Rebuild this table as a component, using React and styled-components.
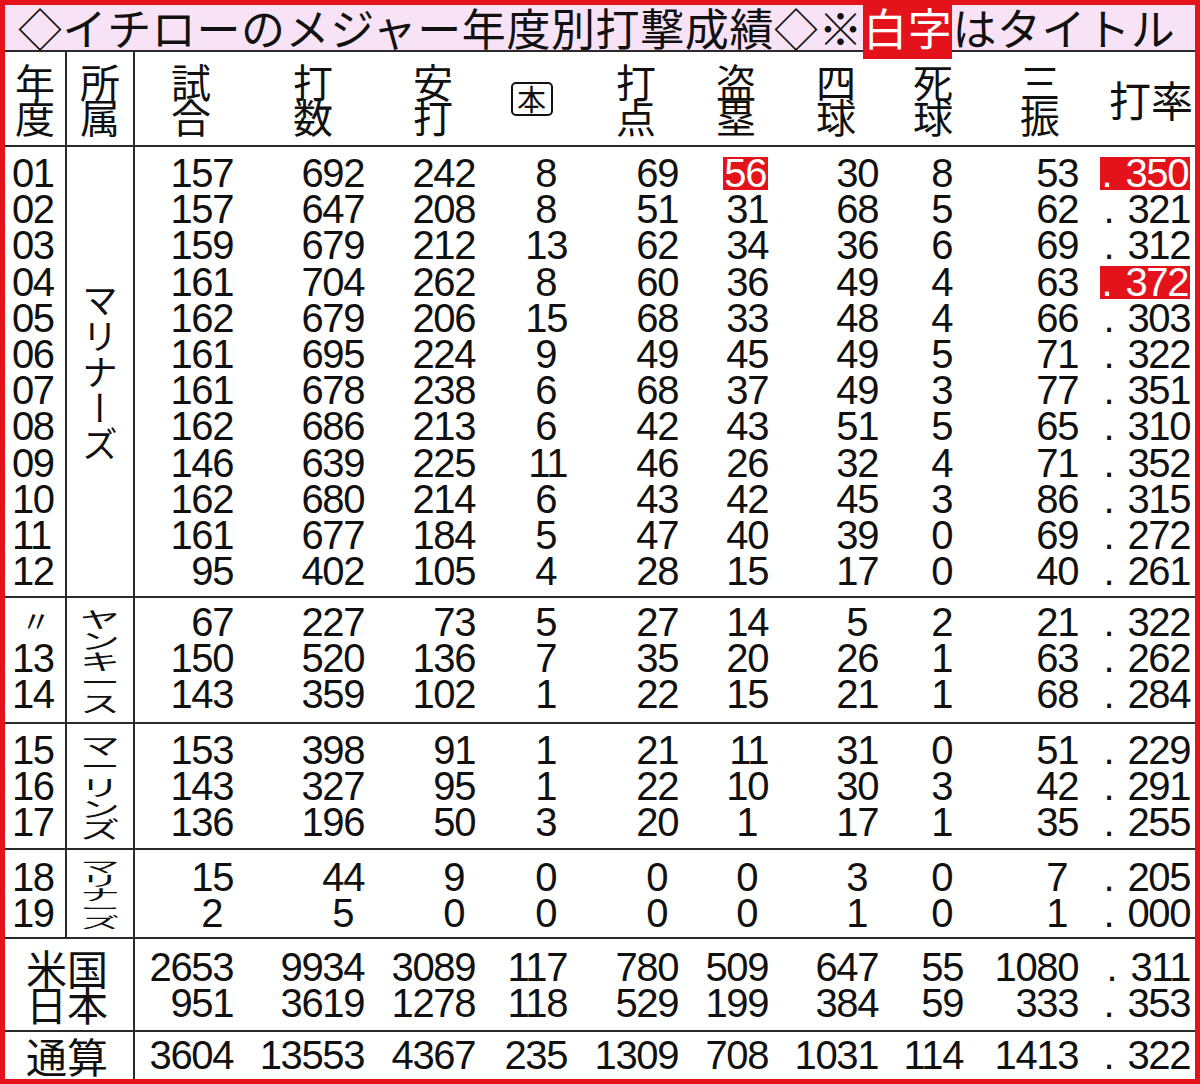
import React from "react";
import styled, { createGlobalStyle } from "styled-components";

const RED = "#e3121b";
const LINE = "#2a2a2a";
const NUM_FONT = `"Liberation Sans", Arial, sans-serif`;
const JP_FONT = `"Noto Sans CJK JP", "Noto Sans", sans-serif`;

// numeric columns: 試合 打数 安打 本 打点 盗塁 四球 死球 三振 打率
const BODY_COLS = "98px 131px 111px 92px 111px 90px 110px 85px 115px 112px";
const HEAD_COLS = "112px 132px 108px 90px 118px 82px 118px 76px 138px 1fr";
const ROW_H = 36.2;

const GlobalStyle = createGlobalStyle`
  html, body {
    margin: 0;
    padding: 0;
    background: #fff;
  }
  body {
    font-family: ${JP_FONT};
    color: #111;
  }
`;

const Frame = styled.div`
  width: 1200px;
  height: 1084px;
  box-sizing: border-box;
  border: 5px solid ${RED};
  background: #fff;
  display: flex;
  flex-direction: column;
  overflow: hidden;
`;

const Title = styled.div`
  height: 47px;
  box-sizing: border-box;
  background: #f8e2f5;
  border-bottom: 2px solid ${LINE};
  padding-left: 13px;
  font: 400 44px/45px ${JP_FONT};
  letter-spacing: 0.6px;
  white-space: nowrap;
`;

const TitleMark = styled.span`
  background: ${RED};
  color: #fff;
`;

const HeadRow = styled.div`
  display: grid;
  grid-template-columns: 62px 68px ${HEAD_COLS};
  height: 95px;
  box-sizing: border-box;
  border-bottom: 2px solid ${LINE};
`;

const HeadCell = styled.div`
  display: flex;
  align-items: center;
  justify-content: ${(p) => (p.$end ? "flex-end" : "center")};
  padding-right: ${(p) => (p.$end ? "12px" : "0")};
  border-right: ${(p) => (p.$divider ? `2px solid ${LINE}` : "none")};
  font: 400 ${(p) => (p.$end ? "42px" : "40px")} / 35px ${JP_FONT};
  text-align: center;
  white-space: nowrap;
`;

const HomerBox = styled.span`
  display: inline-flex;
  align-items: center;
  justify-content: center;
  width: 38px;
  height: 30px;
  margin-right: 1px;
  border: 2px solid #111;
  border-radius: 5px;
  font: 400 29px/1 ${JP_FONT};
`;

const Section = styled.div`
  display: grid;
  grid-template-columns: 62px 68px 1fr;
  grid-template-rows: minmax(0, 1fr);
  height: ${(p) => p.$h}px;
  box-sizing: border-box;
  border-bottom: ${(p) => (p.$last ? "none" : `2px solid ${LINE}`)};
`;

const YearCol = styled.div`
  padding: ${(p) => p.$pt}px 0 0 7px;
  border-right: 2px solid ${LINE};
  font: 400 40px/${ROW_H}px ${NUM_FONT};
  letter-spacing: -1.4px;
`;

const YearLabel = styled.div`
  height: ${ROW_H}px;
`;

const Ditto = styled.span`
  display: inline-block;
  padding-left: 9px;
  font: 400 30px/${ROW_H}px ${JP_FONT};
  transform: translateY(-4px);
`;

const TeamCell = styled.div`
  display: flex;
  align-items: center;
  justify-content: center;
  min-height: 0;
  border-right: 2px solid ${LINE};
`;

const VerticalName = styled.div`
  writing-mode: vertical-rl;
  font: 400 36px/1 ${JP_FONT};
`;

const StackedName = styled.div`
  display: flex;
  flex-direction: column;
  align-items: center;
`;

const StackChar = styled.span`
  display: block;
  height: ${(p) => p.$pitch}px;
  font: 400 40px/${(p) => p.$pitch}px ${JP_FONT};
  transform: scaleY(${(p) => p.$scale});
`;

const MergedLabel = styled.div`
  grid-column: 1 / 3;
  padding: ${(p) => p.$pt}px 4px 0 0;
  border-right: 2px solid ${LINE};
  font: 400 41px/${ROW_H}px ${JP_FONT};
  text-align: center;
`;

const RowsCol = styled.div`
  padding-top: ${(p) => p.$pt}px;
`;

const Row = styled.div`
  display: grid;
  grid-template-columns: ${BODY_COLS};
  height: ${ROW_H}px;
  font: 400 40px/${ROW_H}px ${NUM_FONT};
  letter-spacing: -1.4px;
`;

const Cell = styled.div`
  text-align: right;
  white-space: nowrap;
  padding-right: ${(p) => (p.$single ? "11px" : "0")};
`;

const Highlight = styled.span`
  display: inline-block;
  background: ${RED};
  color: #fff;
  line-height: 33px;
  padding: 0 2px 0 1px;
`;

const Dot = styled.span`
  display: inline-block;
  width: 24px;
  text-align: left;
`;

const sections = [
  {
    h: 451,
    pt: 8,
    team: { name: "マリナーズ" },
    rows: [
      ["01", "157", "692", "242", "8", "69", "*56", "30", "8", "53", "*.350"],
      ["02", "157", "647", "208", "8", "51", "31", "68", "5", "62", ".321"],
      ["03", "159", "679", "212", "13", "62", "34", "36", "6", "69", ".312"],
      ["04", "161", "704", "262", "8", "60", "36", "49", "4", "63", "*.372"],
      ["05", "162", "679", "206", "15", "68", "33", "48", "4", "66", ".303"],
      ["06", "161", "695", "224", "9", "49", "45", "49", "5", "71", ".322"],
      ["07", "161", "678", "238", "6", "68", "37", "49", "3", "77", ".351"],
      ["08", "162", "686", "213", "6", "42", "43", "51", "5", "65", ".310"],
      ["09", "146", "639", "225", "11", "46", "26", "32", "4", "71", ".352"],
      ["10", "162", "680", "214", "6", "43", "42", "45", "3", "86", ".315"],
      ["11", "161", "677", "184", "5", "47", "40", "39", "0", "69", ".272"],
      ["12", "95", "402", "105", "4", "28", "15", "17", "0", "40", ".261"],
    ],
  },
  {
    h: 126,
    pt: 6,
    team: { name: "ヤンキース", pitch: 21, scale: 0.56 },
    rows: [
      ["〃", "67", "227", "73", "5", "27", "14", "5", "2", "21", ".322"],
      ["13", "150", "520", "136", "7", "35", "20", "26", "1", "63", ".262"],
      ["14", "143", "359", "102", "1", "22", "15", "21", "1", "68", ".284"],
    ],
  },
  {
    h: 126,
    pt: 8,
    team: { name: "マーリンズ", pitch: 21, scale: 0.56 },
    rows: [
      ["15", "153", "398", "91", "1", "21", "11", "31", "0", "51", ".229"],
      ["16", "143", "327", "95", "1", "22", "10", "30", "3", "42", ".291"],
      ["17", "136", "196", "50", "3", "20", "1", "17", "1", "35", ".255"],
    ],
  },
  {
    h: 89,
    pt: 9,
    team: { name: "マリナーズ", pitch: 14, scale: 0.38 },
    rows: [
      ["18", "15", "44", "9", "0", "0", "0", "3", "0", "7", ".205"],
      ["19", "2", "5", "0", "0", "0", "0", "1", "0", "1", ".000"],
    ],
  },
  {
    h: 93,
    pt: 10,
    merged: true,
    rows: [
      ["米国", "2653", "9934", "3089", "117", "780", "509", "647", "55", "1080", ".311"],
      ["日本", "951", "3619", "1278", "118", "529", "199", "384", "59", "333", ".353"],
    ],
  },
  {
    h: 47,
    pt: 5,
    merged: true,
    last: true,
    rows: [
      ["通算", "3604", "13553", "4367", "235", "1309", "708", "1031", "114", "1413", ".322"],
    ],
  },
];

const Value = ({ raw }) => {
  const hot = raw.startsWith("*");
  const v = hot ? raw.slice(1) : raw;
  const body = v.startsWith(".") ? (
    <>
      <Dot>.</Dot>
      {v.slice(1)}
    </>
  ) : (
    v
  );
  return (
    <Cell $single={v.length === 1}>
      {hot ? <Highlight>{body}</Highlight> : body}
    </Cell>
  );
};

const TeamName = ({ team }) => {
  if (!team.pitch) return <VerticalName>{team.name}</VerticalName>;
  return (
    <StackedName>
      {team.name.split("").map((ch, i) => (
        <StackChar key={i} $pitch={team.pitch} $scale={team.scale}>
          {ch}
        </StackChar>
      ))}
    </StackedName>
  );
};

const StatSection = ({ section }) => {
  const { h, pt, team, merged, last, rows } = section;
  return (
    <Section $h={h} $last={last}>
      {merged ? (
        <MergedLabel $pt={pt}>
          {rows.map((r) => (
            <div key={r[0]}>{r[0]}</div>
          ))}
        </MergedLabel>
      ) : (
        <>
          <YearCol $pt={pt}>
            {rows.map((r) => (
              <YearLabel key={r[0]}>
                {r[0] === "〃" ? <Ditto>〃</Ditto> : r[0]}
              </YearLabel>
            ))}
          </YearCol>
          <TeamCell>
            <TeamName team={team} />
          </TeamCell>
        </>
      )}
      <RowsCol $pt={pt}>
        {rows.map((r) => (
          <Row key={r[0]}>
            {r.slice(1).map((v, i) => (
              <Value key={i} raw={v} />
            ))}
          </Row>
        ))}
      </RowsCol>
    </Section>
  );
};

const twoLine = (a, b) => (
  <span>
    {a}
    <br />
    {b}
  </span>
);

export default function App() {
  return (
    <>
      <GlobalStyle />
      <Frame>
        <Title>
          ◇イチローのメジャー年度別打撃成績◇※<TitleMark>白字</TitleMark>はタイトル
        </Title>
        <HeadRow>
          <HeadCell $divider>{twoLine("年", "度")}</HeadCell>
          <HeadCell $divider>{twoLine("所", "属")}</HeadCell>
          <HeadCell>{twoLine("試", "合")}</HeadCell>
          <HeadCell>{twoLine("打", "数")}</HeadCell>
          <HeadCell>{twoLine("安", "打")}</HeadCell>
          <HeadCell>
            <HomerBox>本</HomerBox>
          </HeadCell>
          <HeadCell>{twoLine("打", "点")}</HeadCell>
          <HeadCell>{twoLine("盗", "塁")}</HeadCell>
          <HeadCell>{twoLine("四", "球")}</HeadCell>
          <HeadCell>{twoLine("死", "球")}</HeadCell>
          <HeadCell>{twoLine("三", "振")}</HeadCell>
          <HeadCell $end>打率</HeadCell>
        </HeadRow>
        {sections.map((s, i) => (
          <StatSection key={i} section={s} />
        ))}
      </Frame>
    </>
  );
}
